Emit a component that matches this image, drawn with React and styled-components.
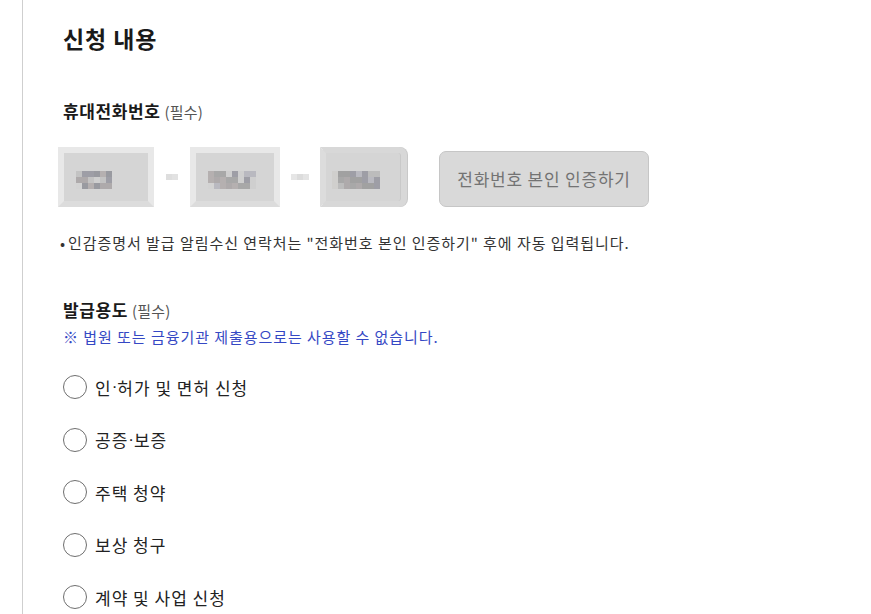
import React from "react";
import styled, { createGlobalStyle } from "styled-components";

const Global = createGlobalStyle`
  html, body { margin: 0; padding: 0; background: #fff; }
  body { font-family: "Noto Sans CJK KR", "Noto Sans", sans-serif; color: #222; }
`;

const Page = styled.div`
  margin-left: 22px;
  border-left: 1px solid #cfcfcf;
  min-height: 614px;
  padding: 22px 0 0 40px;
  box-sizing: border-box;
`;

const Title = styled.h2`
  margin: 0;
  font-size: 23px;
  line-height: 32px;
  font-weight: 700;
  color: #1a1a1a;
  letter-spacing: 0.9px;
`;

const Label = styled.div`
  margin-top: ${(p) => p.$mt}px;
  font-size: 17px;
  line-height: 24px;
  font-weight: 700;
  color: #1a1a1a;
  letter-spacing: 0.6px;
`;

const Required = styled.span`
  font-size: 15px;
  font-weight: 400;
  color: #555;
  margin-left: 4px;
  letter-spacing: 0.2px;
`;

const PhoneRow = styled.div`
  display: flex;
  align-items: center;
  margin: 23px 0 0 -5px;
  height: 60px;
`;

const Masked = styled.div`
  position: relative;
  width: ${(p) => p.$w}px;
  height: 60px;
  box-sizing: border-box;
  background: #d5d5d5;
  border: 6px solid ${(p) => (p.$last ? "#d8d8d8" : "#e8e8e8")};
  border-bottom-color: ${(p) => (p.$last ? "#d8d8d8" : "#dcdcdc")};
  border-left-color: ${(p) => (p.$last ? "#dcdcdc" : "#e8e8e8")};
  border-radius: ${(p) => (p.$last ? "0 8px 8px 0" : "0")};
  box-shadow: ${(p) => (p.$last ? "inset -1px 0 0 #c9c9c9, 1px 0 0 #c9c9c9" : "none")};
`;

const Mosaic = styled.div`
  position: absolute;
  left: ${(p) => p.$x}px;
  top: 18px;
  display: grid;
  grid-template-columns: repeat(${(p) => p.$cols}, 6px);
  grid-auto-rows: 6px;
`;

const Pixel = styled.span`
  display: block;
  width: 6px;
  height: 6px;
`;

const Dash = styled.div`
  display: flex;
  margin: 0 ${(p) => p.$m}px;
`;

const DashPixel = styled.span`
  width: 6px;
  height: 6px;
  background: ${(p) => p.$c};
`;

const VerifyButton = styled.button`
  margin-left: 32px;
  margin-top: 3px;
  width: 210px;
  height: 56px;
  border: 1px solid #c6c6c6;
  border-radius: 7px;
  background: #d9d9d9;
  color: #737373;
  font-family: "Noto Sans CJK KR", "Noto Sans", sans-serif;
  font-size: 17px;
  letter-spacing: 0.8px;
  padding: 0;
`;

const Note = styled.p`
  margin: 24px 0 0 -3px;
  font-size: 15px;
  line-height: 24px;
  color: #333;
  letter-spacing: 0.95px;
  &::before {
    content: "•";
    margin-right: 2px;
  }
`;

const Warn = styled.p`
  margin: 3px 0 0 0;
  font-size: 15px;
  line-height: 22px;
  color: #3548c4;
  letter-spacing: 0.95px;
`;

const Options = styled.div`
  display: flex;
  flex-direction: column;
  margin-top: 27px;
  gap: 28px;
`;

const Option = styled.label`
  display: flex;
  align-items: center;
  height: 24.5px;
  font-size: 17px;
  color: #222;
  letter-spacing: 1px;
`;

const Dot = styled.span`
  font-family: "Liberation Sans", sans-serif;
  letter-spacing: 0;
`;

const Circle = styled.span`
  width: 24px;
  height: 24px;
  box-sizing: border-box;
  border: 1.5px solid #6f6f6f;
  border-radius: 50%;
  margin-right: 8px;
  flex: none;
`;

const g = ["#a8a8a8", "#9e9ea6", "#b5b0b0", "#c3c3c3", "#a1a1a1", "#b9b9c0", "#aeaaab", "#cfcfcf", "#999aa0", "#bcbcbc"];
const mk = (cols, seed, lightFirst) =>
  Array.from({ length: cols * 3 }, (_, i) => {
    if (lightFirst && i % cols === 0) return "#d0cfcd";
    if (i >= cols * 2 && i % cols === 0) return "#d3d3d3";
    return g[(i * 7 + seed * 3 + ((i * i) % 5)) % g.length];
  });

const boxes = [
  { w: 96, x: 12, cols: 6, seed: 1 },
  { w: 90, x: 12, cols: 8, seed: 4 },
  { w: 87, x: 6, cols: 8, seed: 2, last: true },
];

const options = [
  ["인", "허가 및 면허 신청"],
  ["공증", "보증"],
  ["주택 청약"],
  ["보상 청구"],
  ["계약 및 사업 신청"],
];

function MaskBox({ w, x, cols, seed, last }) {
  const px = mk(cols, seed, last);
  return (
    <Masked $w={w} $last={last}>
      <Mosaic $x={x} $cols={cols}>
        {px.map((c, i) => (
          <Pixel key={i} style={{ background: c }} />
        ))}
      </Mosaic>
    </Masked>
  );
}

export default function App() {
  return (
    <>
      <Global />
      <Page>
        <Title>신청 내용</Title>
        <Label $mt={45}>
          휴대전화번호<Required>(필수)</Required>
        </Label>
        <PhoneRow>
          <MaskBox {...boxes[0]} />
          <Dash $m={12}>
            <DashPixel $c="#dedede" />
            <DashPixel $c="#e2e2e2" />
          </Dash>
          <MaskBox {...boxes[1]} />
          <Dash $m={11}>
            <DashPixel $c="#e6e6e6" />
            <DashPixel $c="#dcdcdc" />
            <DashPixel $c="#e4e4e4" />
          </Dash>
          <MaskBox {...boxes[2]} />
          <VerifyButton type="button">전화번호 본인 인증하기</VerifyButton>
        </PhoneRow>
        <Note>인감증명서 발급 알림수신 연락처는 "전화번호 본인 인증하기" 후에 자동 입력됩니다.</Note>
        <Label $mt={43}>
          발급용도<Required>(필수)</Required>
        </Label>
        <Warn>※ 법원 또는 금융기관 제출용으로는 사용할 수 없습니다.</Warn>
        <Options>
          {options.map((parts) => (
            <Option key={parts.join("·")}>
              <Circle />
              {parts[0]}
              {parts[1] && (
                <>
                  <Dot>·</Dot>
                  {parts[1]}
                </>
              )}
            </Option>
          ))}
        </Options>
      </Page>
    </>
  );
}
